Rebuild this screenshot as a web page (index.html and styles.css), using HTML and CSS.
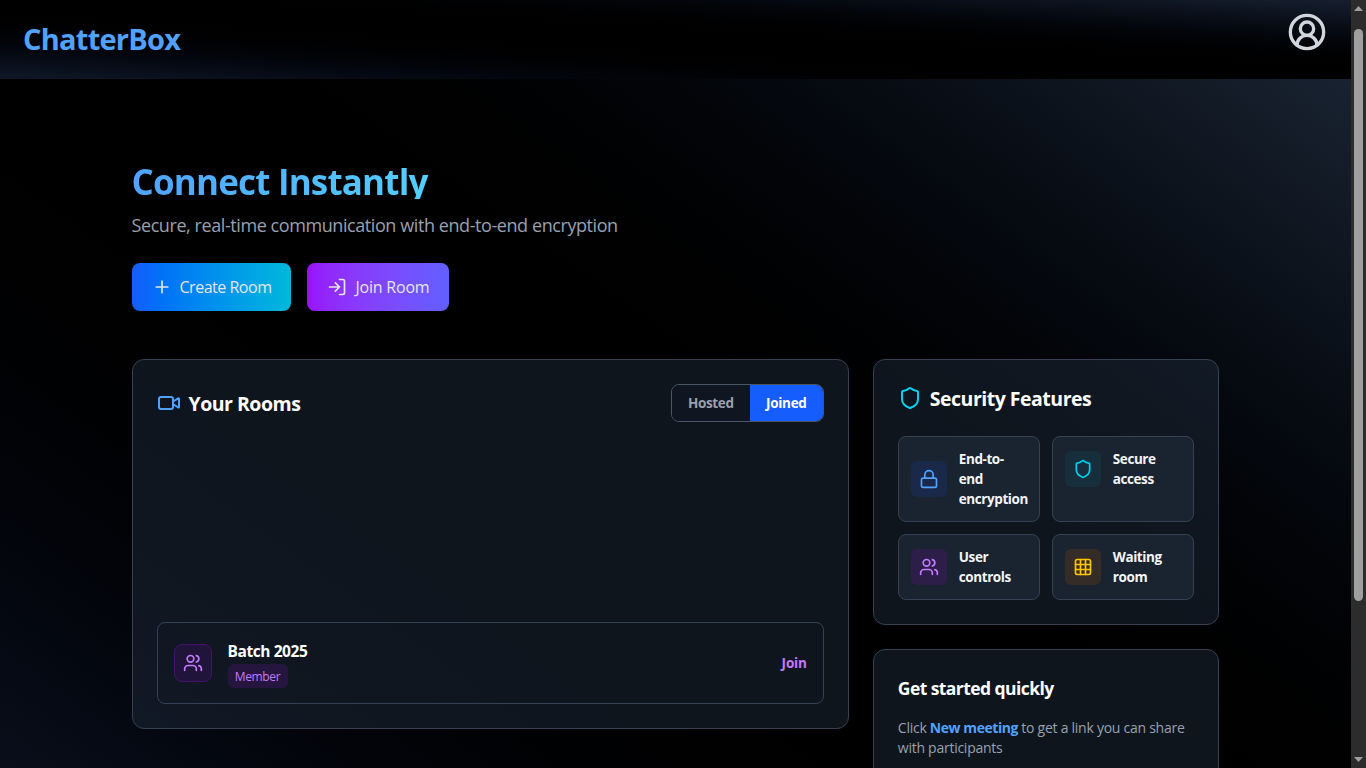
FILE: index.html
```html
<!DOCTYPE html>
<html lang="en">
<head>
<meta charset="utf-8">
<title>ChatterBox</title>
<link rel="stylesheet" href="styles.css">
</head>
<body>
<svg class="sprite" aria-hidden="true">
  <symbol id="users" viewBox="0 0 24 24"><path d="M16 21v-2a4 4 0 0 0-4-4H6a4 4 0 0 0-4 4v2"/><circle cx="9" cy="7" r="4"/><path d="M22 21v-2a4 4 0 0 0-3-3.87M16 3.13a4 4 0 0 1 0 7.75"/></symbol>
  <symbol id="shield" viewBox="0 0 24 24"><path d="M20 13c0 5-3.5 7.5-7.66 8.95a1 1 0 0 1-.67-.01C7.5 20.5 4 18 4 13V6a1 1 0 0 1 1-1c2 0 4.500-1.200 6.240-2.720a1.170 1.170 0 0 1 1.520 0C14.510 3.810 17 5 19 5a1 1 0 0 1 1 1z"/></symbol>
</svg>
<div class="window">
  <div class="page">
    <header class="topbar">
      <div class="brand"><span class="t-brand">ChatterBox</span></div>
      <svg class="avatar" viewBox="0 0 24 24"><path d="M18 20a6 6 0 0 0-12 0"/><circle cx="12" cy="10" r="4"/><circle cx="12" cy="12" r="10"/></svg>
    </header>
    <main class="content">
      <section class="hero">
        <h1 class="headline">Connect Instantly</h1>
        <p class="tagline">Secure, real-time communication with end-to-end encryption</p>
        <div class="actions">
          <button class="btn btn-create"><svg class="i20" viewBox="0 0 24 24"><path d="M5 12h14M12 5v14"/></svg><span>Create Room</span></button>
          <button class="btn btn-join"><svg class="i20" viewBox="0 0 24 24"><path d="M15 3h4a2 2 0 0 1 2 2v14a2 2 0 0 1-2 2h-4M10 17l5-5-5-5M15 12H3"/></svg><span>Join Room</span></button>
        </div>
      </section>
      <div class="columns">
        <section class="card rooms">
          <div class="rooms-head">
            <h2 class="title title-rooms"><svg class="i24 blue" viewBox="0 0 24 24"><path d="m16 13 5.223 3.482a.5.5 0 0 0 .777-.416V7.870a.5.5 0 0 0-.752-.432L16 10.500"/><rect x="2" y="6" width="14" height="12" rx="2"/></svg><span>Your Rooms</span></h2>
            <div class="toggle"><button class="tab tab-hosted">Hosted</button><button class="tab tab-joined">Joined</button></div>
          </div>
          <div class="room">
            <div class="room-icon"><svg class="i20"><use href="#users"/></svg></div>
            <div class="room-info"><div class="room-name">Batch 2025</div><span class="badge">Member</span></div>
            <a class="join">Join</a>
          </div>
        </section>
        <div class="side">
          <section class="card security">
            <h2 class="title title-security"><svg class="i24 cyan"><use href="#shield"/></svg><span>Security Features</span></h2>
            <div class="features">
              <div class="feature"><div class="row"><div class="chip chip-blue"><svg class="i20" viewBox="0 0 24 24"><rect x="3" y="11" width="18" height="11" rx="2"/><path d="M7 11V7a5 5 0 0 1 10 0v4"/></svg></div><span>End-to-<br>end<br>encryption</span></div></div>
              <div class="feature"><div class="row"><div class="chip chip-cyan"><svg class="i20"><use href="#shield"/></svg></div><span>Secure<br>access</span></div></div>
              <div class="feature"><div class="row"><div class="chip chip-purple"><svg class="i20"><use href="#users"/></svg></div><span>User<br>controls</span></div></div>
              <div class="feature"><div class="row"><div class="chip chip-yellow"><svg class="i20" viewBox="0 0 24 24"><rect x="3" y="3" width="18" height="18" rx="2"/><path d="M3 9h18M3 15h18M9 3v18M15 3v18"/></svg></div><span>Waiting<br>room</span></div></div>
            </div>
          </section>
          <section class="card start">
            <h3 class="start-title">Get started quickly</h3>
            <p class="start-text">Click <strong>New meeting</strong> to get a link you can share<br>with participants</p>
          </section>
        </div>
      </div>
    </main>
  </div>
  <div class="scrollbar">
    <svg class="arrow" viewBox="0 0 15 17"><path d="M3 11 7.500 6 12 11z"/></svg>
    <div class="thumb"></div>
    <svg class="arrow" viewBox="0 0 15 17"><path d="M3 6 7.500 11 12 6z"/></svg>
  </div>
</div>
</body>
</html>
```
FILE: styles.css
```css
* { box-sizing: border-box; margin: 0; }
body { background: #000; font-family: "Open Sans", "Noto Sans", sans-serif; color: #fff; overflow: hidden; }
button { font-family: inherit; border: 0; padding: 0; color: inherit; background: none; letter-spacing: inherit; }
svg { display: block; flex: none; fill: none; stroke: currentColor; stroke-width: 2; stroke-linecap: round; stroke-linejoin: round; }
.sprite { display: none; }
.i20 { width: 20px; height: 20px; }
.i24 { width: 24px; height: 24px; }
.blue { color: #51a2ff; }
.cyan { color: #00d3f2; }

.window { display: flex; width: 1366px; height: 768px; overflow: hidden; }
.page {
  width: 1351px; height: 768px; overflow: hidden;
  background: linear-gradient(to top right in oklab, #101828, #000, #1e2939) 0 -16px / 1351px 985px no-repeat;
}
.topbar {
  height: 79px; padding: 12px 24px 0; display: flex; justify-content: space-between; align-items: flex-start;
  background: linear-gradient(to top right in oklab, #101828, #000, #172030);
}
.brand { height: 54px; display: flex; align-items: center; }
.t-brand { font-size: 29px; line-height: 36px; font-weight: 700; color: #51a2ff; letter-spacing: -.750px; margin-left: -1px; }
.avatar { width: 40px; height: 40px; color: #d1d5dc; }

.content { width: 1088px; margin: 0 auto; padding-top: 84px; }
.headline {
  width: 486px; height: 36px; font-size: 35px; line-height: 37px; font-weight: 700; letter-spacing: -.820px;
  background: linear-gradient(to right in oklab, #51a2ff, #53eafd); background-clip: text; -webkit-background-clip: text; color: transparent;
}
.tagline { margin-top: 12px; font-size: 18px; line-height: 28px; color: #99a1af; white-space: nowrap; letter-spacing: -.420px; }
.actions { display: flex; gap: 16px; margin-top: 24px; }
.btn { height: 48px; border-radius: 8px; padding: 0 20px; display: flex; align-items: center; gap: 8px; font-size: 16px; line-height: 24px; white-space: nowrap; color: #e5e7eb; }
.btn-create { width: 159px; background: linear-gradient(to right in oklab, #155dfc, #00b8db); letter-spacing: -.480px; }
.btn-join { width: 142px; background: linear-gradient(to right in oklab, #9810fa, #615fff); letter-spacing: -.220px; }
.btn-join span { padding-left: 1px; }

.columns { display: grid; grid-template-columns: 717.330px 346.660px; gap: 24px; margin-top: 48px; align-items: start; }
.card { border: 1px solid #364153; border-radius: 12px; background: rgba(30, 41, 57, .5); padding: 24px; }
.rooms { height: 370px; display: flex; flex-direction: column; justify-content: space-between; }
.rooms-head { display: flex; justify-content: space-between; align-items: center; }
.title { display: flex; align-items: center; gap: 8px; font-size: 19.500px; line-height: 28px; font-weight: 700; white-space: nowrap; letter-spacing: -.500px; }
.title span { padding-top: 1px; margin-bottom: -1px; }
.title-security { height: 28px; }
.toggle { display: flex; width: 153px; height: 38px; border: 1px solid #4a5565; border-radius: 8px; overflow: hidden; }
.tab { font-size: 13.500px; line-height: 20px; font-weight: 700; letter-spacing: -.320px; }
.tab-hosted { width: 78px; color: #99a1af; background: #0f1521; }
.tab-joined { width: 73px; background: #155dfc; }
.room { height: 82px; border: 1px solid #364153; border-radius: 8px; padding: 0 16px; display: flex; align-items: center; }
.room-icon { width: 38px; height: 38px; border: 1px solid #48106f; border-radius: 8px; background: #21143a; color: #c27aff; display: grid; place-items: center; }
.room-info { margin-left: 16px; display: flex; flex-direction: column; align-items: flex-start; padding-top: 1px; }
.room-name { font-size: 15.500px; line-height: 23px; margin-bottom: 1px; font-weight: 700; letter-spacing: -.420px; }
.badge { width: 60px; height: 24px; line-height: 25px; border-radius: 6px; background: #26153f; color: #c27aff; font-size: 12px; text-align: center; letter-spacing: -.350px; }
.join { margin-left: auto; font-size: 13.500px; line-height: 20px; font-weight: 700; color: #c27aff; letter-spacing: -.150px; }

.side { display: flex; flex-direction: column; gap: 24px; }
.security { height: 266px; }
.features { display: grid; grid-template-columns: 142px 142px; gap: 12px; margin-top: 24px; }
.feature { border: 1px solid #364153; border-radius: 8px; padding: 12px; background: rgba(30, 41, 55, .75); }
.row { display: flex; align-items: center; gap: 12px; font-size: 13.500px; line-height: 20px; font-weight: 700; letter-spacing: -.430px; white-space: nowrap; color: #f3f4f6; }
.chip { width: 36px; height: 36px; border-radius: 6px; display: grid; place-items: center; flex: none; }
.chip-blue { background: #1a2849; color: #51a2ff; }
.chip-cyan { background: #172f3d; color: #00d3f2; }
.chip-purple { background: #2c1e49; color: #c27aff; }
.chip-yellow { background: #352b27; color: #fdc700; }
.start { height: 220px; }
.start-title { font-size: 17.500px; line-height: 28px; font-weight: 700; letter-spacing: -.570px; }
.start-text { margin-top: 16px; font-size: 14px; line-height: 20px; color: #99a1af; white-space: nowrap; letter-spacing: -.260px; }
.start-text strong { color: #51a2ff; font-weight: 700; letter-spacing: -.450px; }

.scrollbar { width: 15px; height: 768px; background: #2c2c2c; display: flex; flex-direction: column; align-items: center; }
.arrow { width: 15px; height: 17px; fill: #9f9f9f; stroke: none; }
.thumb { width: 9px; height: 572px; margin: 12px 0 150px; border-radius: 5px; background: #9f9f9f; }
```
